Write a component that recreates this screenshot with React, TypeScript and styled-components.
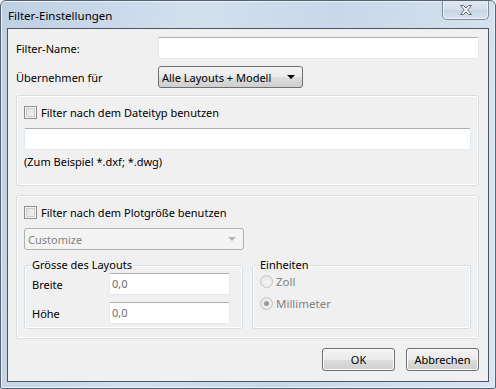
import React from "react";
import styled, { createGlobalStyle } from "styled-components";

const Global = createGlobalStyle`
  html, body { margin: 0; padding: 0; background: #ffffff; }
  body { font-family: "Noto Sans", "Open Sans", sans-serif; font-size: 11px; color: #000; }
  * { box-sizing: border-box; }
`;

const Frame = styled.div`
  position: relative;
  width: 496px;
  height: 389px;
  display: flex;
  flex-direction: column;
  border: 1px solid #55626f;
  border-radius: 6px 6px 2px 2px;
  background: linear-gradient(100deg, #bfd0e3 0%, #d2e0ee 35%, #c8d8e8 60%, #d9e5f1 100%);
  box-shadow: inset 0 0 0 1px #e9f0f7;
  overflow: hidden;
`;

const TitleBar = styled.div`
  height: 27px;
  flex: none;
  display: flex;
  align-items: center;
  padding-left: 7px;
  padding-top: 1px;
  position: relative;
`;

const Title = styled.span`
  font-size: 11.5px;
  color: #000;
`;

const CloseBtn = styled.div`
  position: absolute;
  top: -1px;
  right: 6px;
  width: 47px;
  height: 20px;
  border: 1px solid #7d8b9a;
  border-top: none;
  border-radius: 0 0 5px 5px;
  background: linear-gradient(#e3ebf3, #d2dde9 50%, #c6d4e3 51%, #d7e2ed);
  box-shadow: inset 0 0 0 1px rgba(255,255,255,0.6);
  display: flex;
  align-items: center;
  justify-content: center;
`;

const Client = styled.div`
  margin: 0 6px 6px 6px;
  flex: 1;
  border: 1px solid #4b5662;
  background: #f0f0f0;
  display: flex;
  flex-direction: column;
  padding: 8px 7px 0 8px;
`;

const Row = styled.div<{ $mt?: number }>`
  display: flex;
  align-items: center;
  height: 22px;
  margin-top: ${(p) => p.$mt ?? 0}px;
`;

const Label = styled.span<{ $w?: number }>`
  width: ${(p) => p.$w ?? 142}px;
  flex: none;
`;

const TextInput = styled.div<{ $w?: number }>`
  width: ${(p) => (p.$w ? `${p.$w}px` : "auto")};
  flex: ${(p) => (p.$w ? "none" : "1")};
  height: 22px;
  background: #fff;
  border: 1px solid #e3e9ef;
  border-top-color: #abadb3;
  border-radius: 2px;
  padding: 2px 2px;
  color: #6d6d6d;
  line-height: 16px;
`;

const Combo = styled.div<{ $w: number; $disabled?: boolean }>`
  width: ${(p) => p.$w}px;
  height: 22px;
  border: 1px solid ${(p) => (p.$disabled ? "#adb2b5" : "#707070")};
  border-radius: 3px;
  background: ${(p) =>
    p.$disabled
      ? "#f4f4f4"
      : "linear-gradient(#f2f2f2 0%, #ebebeb 50%, #dddddd 51%, #cfcfcf 100%)"};
  display: flex;
  align-items: center;
  justify-content: space-between;
  padding: 0 7px 0 3px;
  color: ${(p) => (p.$disabled ? "#838383" : "#000")};
`;

const Arrow = styled.span<{ $disabled?: boolean }>`
  width: 0;
  height: 0;
  border-left: 4px solid transparent;
  border-right: 4px solid transparent;
  border-top: 4px solid ${(p) => (p.$disabled ? "#b5b5b5" : "#000")};
`;

const Group = styled.div<{ $h: number; $mt: number }>`
  height: ${(p) => p.$h}px;
  margin-top: ${(p) => p.$mt}px;
  width: 463px;
  border: 1px solid #d5dfe5;
  border-radius: 3px;
  box-shadow: inset 0 0 0 1px #ffffff;
  display: flex;
  flex-direction: column;
  padding: 9px 7px 0 7px;
`;

const CheckRow = styled.label`
  display: flex;
  align-items: center;
  gap: 4px;
  height: 15px;
`;

const Check = styled.span`
  width: 13px;
  height: 13px;
  border: 1px solid #8f8f8f;
  background: linear-gradient(135deg, #dcdcdc, #f6f6f6);
  box-shadow: inset 0 0 0 1px #f4f4f4, inset 0 0 0 2px #cdcdcd;
  flex: none;
`;

const Hint = styled.div`
  margin-top: 4px;
  height: 16px;
`;

const SubRow = styled.div`
  display: flex;
  gap: 9px;
  margin-top: 15px;
`;

const SubGroup = styled.div`
  position: relative;
  width: 219px;
  height: 64px;
  border: 1px solid #d5dfe5;
  border-radius: 3px;
  box-shadow: inset 0 0 0 1px #ffffff;
  padding: 7px 13px 0 7px;
  display: flex;
  flex-direction: column;
`;

const Legend = styled.span`
  position: absolute;
  top: -9px;
  left: 6px;
  padding: 0 1px;
  background: #f0f0f0;
  line-height: 16px;
`;

const FieldRow = styled.div<{ $mt?: number }>`
  display: flex;
  align-items: center;
  height: 22px;
  margin-top: ${(p) => p.$mt ?? 0}px;
`;

const RadioRow = styled.div<{ $mt?: number }>`
  display: flex;
  align-items: center;
  gap: 3px;
  height: 16px;
  margin-top: ${(p) => p.$mt ?? 0}px;
  color: #838383;
  font-size: 11.5px;
`;

const Radio = styled.span<{ $on?: boolean }>`
  width: 13px;
  height: 13px;
  border-radius: 50%;
  border: 1px solid #c3c3c3;
  background: radial-gradient(circle at 60% 60%, #f4f4f4, #e2e2e2);
  display: flex;
  align-items: center;
  justify-content: center;
  flex: none;
  &::after {
    content: "";
    display: ${(p) => (p.$on ? "block" : "none")};
    width: 5px;
    height: 5px;
    border-radius: 50%;
    background: #9a9a9a;
  }
`;

const Buttons = styled.div`
  display: flex;
  justify-content: flex-end;
  gap: 11px;
  margin-top: 9px;
  padding-right: 2px;
`;

const Button = styled.button`
  width: 73px;
  height: 23px;
  border: 1px solid #707070;
  border-radius: 3px;
  background: linear-gradient(#f2f2f2 0%, #ebebeb 50%, #dddddd 51%, #cfcfcf 100%);
  box-shadow: inset 0 0 0 1px #fcfcfc;
  font-family: inherit;
  font-size: 11px;
  color: #000;
  padding: 0;
`;

export default function App() {
  return (
    <>
      <Global />
      <Frame>
        <TitleBar>
          <Title>Filter-Einstellungen</Title>
          <CloseBtn>
            <svg width="14" height="12" viewBox="0 0 14 12">
              <path
                d="M1.5 1.5 L4.5 1.5 L7 4.2 L9.5 1.5 L12.5 1.5 L8.7 6 L12.5 10.5 L9.5 10.5 L7 7.8 L4.5 10.5 L1.5 10.5 L5.3 6 Z"
                fill="#ffffff"
                stroke="#5c6b7b"
                strokeWidth="1"
                strokeLinejoin="round"
              />
            </svg>
          </CloseBtn>
        </TitleBar>
        <Client>
          <Row>
            <Label>Filter-Name:</Label>
            <TextInput $w={321} />
          </Row>
          <Row $mt={7}>
            <Label>Übernehmen für</Label>
            <Combo $w={145}>
              <span>Alle Layouts + Modell</span>
              <Arrow />
            </Combo>
          </Row>
          <Group $h={91} $mt={7}>
            <CheckRow>
              <Check />
              <span>Filter nach dem Dateityp benutzen</span>
            </CheckRow>
            <Row $mt={8}>
              <TextInput />
            </Row>
            <Hint>(Zum Beispiel *.dxf; *.dwg)</Hint>
          </Group>
          <Group $h={144} $mt={9}>
            <CheckRow>
              <Check />
              <span>Filter nach dem Plotgröße benutzen</span>
            </CheckRow>
            <Row $mt={8}>
              <Combo $w={220} $disabled>
                <span>Customize</span>
                <Arrow $disabled />
              </Combo>
            </Row>
            <SubRow>
              <SubGroup>
                <Legend>Grösse des Layouts</Legend>
                <FieldRow>
                  <Label $w={77}>Breite</Label>
                  <TextInput $w={121}>0,0</TextInput>
                </FieldRow>
                <FieldRow $mt={7}>
                  <Label $w={77}>Höhe</Label>
                  <TextInput $w={121}>0,0</TextInput>
                </FieldRow>
              </SubGroup>
              <SubGroup>
                <Legend>Einheiten</Legend>
                <RadioRow>
                  <Radio />
                  <span>Zoll</span>
                </RadioRow>
                <RadioRow $mt={6}>
                  <Radio $on />
                  <span>Millimeter</span>
                </RadioRow>
              </SubGroup>
            </SubRow>
          </Group>
          <Buttons>
            <Button>OK</Button>
            <Button>Abbrechen</Button>
          </Buttons>
        </Client>
      </Frame>
    </>
  );
}
